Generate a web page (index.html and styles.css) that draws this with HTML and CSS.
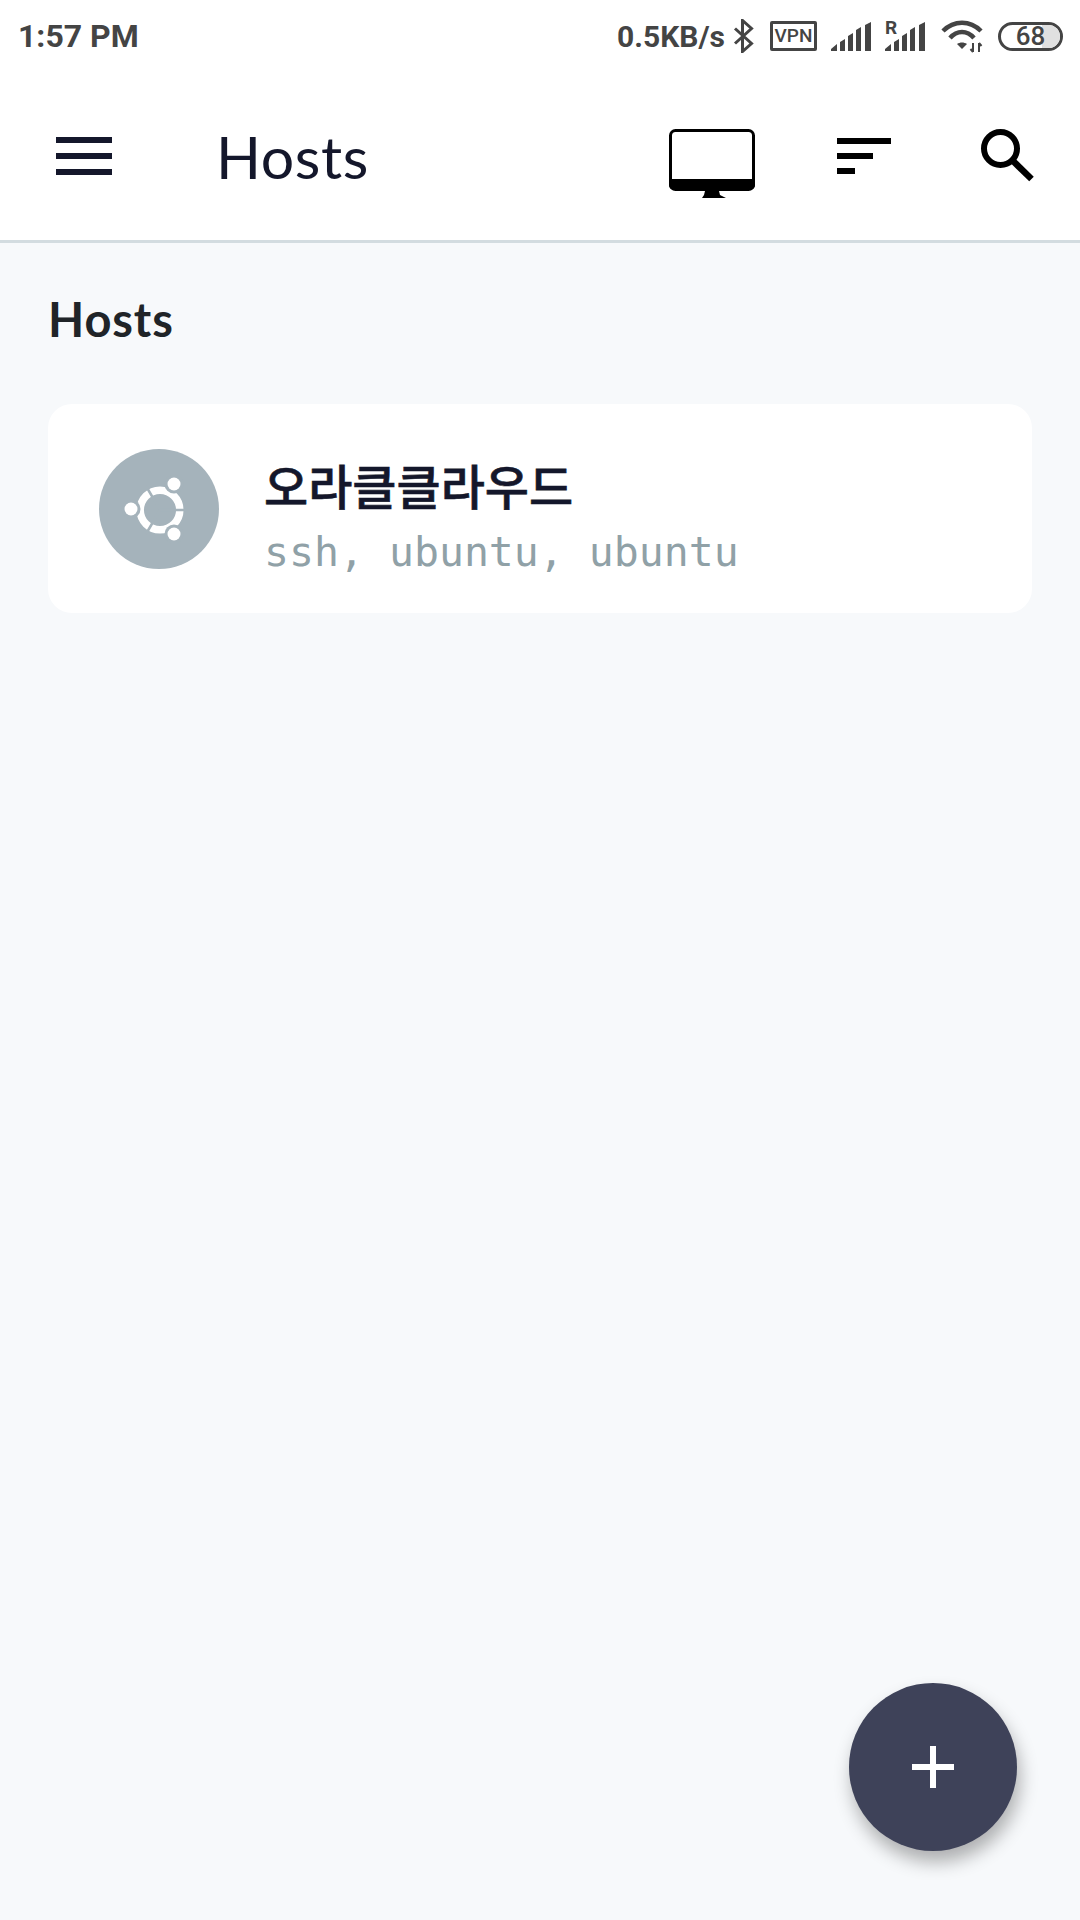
FILE: index.html
```html
<!DOCTYPE html>
<html lang="en">
<head>
<meta charset="UTF-8">
<meta name="viewport" content="width=device-width, initial-scale=1.0">
<title>Hosts</title>
<link rel="stylesheet" href="styles.css">
</head>
<body>
<div class="page">
    <!-- Status bar -->
    <div class="statusBar">
        <span class="clock">1:57 PM</span>
        <div class="statusIcons">
            <span class="speed">0.5KB/s</span>
            <svg class="btIcon" width="21" height="34" viewBox="0 0 21 34">
                <path d="M2 9.5 L18.5 24.5 L9.5 32.5 V1.5 L18.5 9.5 L2 24.5" fill="none" stroke="#444" stroke-width="3"/>
            </svg>
            <span class="vpnBox">VPN</span>
            <svg class="signalOne" width="40" height="29" viewBox="0 0 40 29">
                <path d="M0 29 V27 L6 22 V29 Z M9 29 V20 L14 17 V29 Z M17 29 V14 L22 11 V29 Z M25 29 V8 L30 5 V29 Z M34 29 V3 L40 0 V29 Z" fill="#444"/>
            </svg>
            <div class="roamSignal">
                <span class="roamText">R</span>
                <svg width="40" height="29" viewBox="0 0 40 29">
                    <path d="M0 29 V27 L6 22 V29 Z M9 29 V20 L14 17 V29 Z M17 29 V14 L22 11 V29 Z M25 29 V8 L30 5 V29 Z M34 29 V3 L40 0 V29 Z" fill="#444"/>
                </svg>
            </div>
            <svg class="wifiIcon" width="44" height="34" viewBox="0 0 44 34">
                <path d="M2 12 C13 1 29 1 40 12" fill="none" stroke="#444" stroke-width="4.5"/>
                <path d="M9 19 C16 11 26 11 33 19" fill="none" stroke="#444" stroke-width="4.5"/>
                <path d="M16 25 C19 23 23 23 26 25 L21 30 Z" fill="#444"/>
                <path d="M32 24 V33 M32 33 L29.5 30 M38 33 V24 M38 24 L40.5 27" fill="none" stroke="#444" stroke-width="2"/>
            </svg>
            <div class="battery">
                <span class="batteryFill"></span>
                <span class="batteryText">68</span>
            </div>
        </div>
    </div>

    <!-- App bar -->
    <div class="appBar">
        <div class="menuIcon">
            <span></span>
            <span></span>
            <span></span>
        </div>
        <h1 class="appTitle">Hosts</h1>
        <svg class="monitorIcon" width="86" height="69" viewBox="0 0 86 69">
            <rect x="1.5" y="1.5" width="83" height="59" rx="5" fill="#fff" stroke="#000" stroke-width="3"/>
            <path d="M0 50 H86 V56 a5 5 0 0 1 -5 5 H5 a5 5 0 0 1 -5 -5 Z" fill="#000"/>
            <path d="M36 62 H50 L51 66 L57 69 H33 L35 66 Z" fill="#000"/>
        </svg>
        <div class="sortIcon">
            <span class="sortLong"></span>
            <span class="sortMid"></span>
            <span class="sortShort"></span>
        </div>
        <svg class="searchIcon" width="54" height="54" viewBox="0 0 54 54">
            <circle cx="19.5" cy="19.5" r="16.5" fill="none" stroke="#000" stroke-width="6"/>
            <path d="M31 31 L50.5 50" fill="none" stroke="#000" stroke-width="6.5"/>
        </svg>
    </div>

    <!-- Host list -->
    <div class="content">
        <h2 class="sectionTitle">Hosts</h2>
        <div class="hostCard">
            <div class="hostAvatar">
                <svg width="120" height="120" viewBox="0 0 120 120">
                    <circle cx="61" cy="61" r="19.8" fill="none" stroke="#fff" stroke-width="7.5"/>
                    <path d="M61 61 H88 M61 61 L47 85 M61 61 L47 37" stroke="#a5b3bb" stroke-width="2.5"/>
                    <circle cx="32" cy="60" r="9.5" fill="#a5b3bb"/>
                    <circle cx="75" cy="35" r="9.5" fill="#a5b3bb"/>
                    <circle cx="75" cy="85" r="9.5" fill="#a5b3bb"/>
                    <circle cx="32" cy="60" r="6.5" fill="#fff"/>
                    <circle cx="75" cy="35" r="6.5" fill="#fff"/>
                    <circle cx="75" cy="85" r="6.5" fill="#fff"/>
                </svg>
            </div>
            <div class="hostInfo">
                <div class="hostName">오라클클라우드</div>
                <div class="hostMeta">ssh, ubuntu, ubuntu</div>
            </div>
        </div>
    </div>

    <button class="addButton" type="button">
        <svg width="42" height="42" viewBox="0 0 42 42">
            <path d="M21 0 V42 M0 21 H42" stroke="#fff" stroke-width="6"/>
        </svg>
    </button>
</div>
</body>
</html>
```

FILE: styles.css
```css
/* Page */
body {
    margin: 0;
    background-color: #f7f9fb;
    font-family: "Lato", "Noto Sans CJK KR", sans-serif;
}

.page {
    position: relative;
    width: 1080px;
    height: 1920px;
    overflow: hidden;
    display: flex;
    flex-direction: column;
}

/* Status bar */
.statusBar {
    height: 72px;
    padding: 0 17px 0 18px;
    display: flex;
    align-items: center;
    justify-content: space-between;
    background-color: #fff;
    color: #444;
    font-family: "Roboto", sans-serif;
    font-weight: 700;
}

.clock {
    font-size: 32px;
}

.statusIcons {
    display: flex;
    align-items: center;
}

.speed {
    font-size: 30px;
    margin-right: 8px;
}

.btIcon {
    margin-right: 16px;
}

.vpnBox {
    box-sizing: border-box;
    width: 47px;
    height: 30px;
    margin-right: 14px;
    border: 3px solid #444;
    border-radius: 2px;
    font-size: 19px;
    font-weight: 500;
    line-height: 24px;
    text-align: center;
}

.signalOne {
    margin-right: 14px;
}

.roamSignal {
    position: relative;
    display: flex;
    margin-right: 16px;
}

.roamText {
    position: absolute;
    left: 0;
    top: -5px;
    font-size: 19px;
    line-height: 22px;
}

.wifiIcon {
    margin-right: 13px;
}

.battery {
    position: relative;
    box-sizing: border-box;
    width: 65px;
    height: 29px;
    border: 3px solid #444;
    border-radius: 15px;
    display: flex;
    align-items: center;
    justify-content: center;
    font-size: 26px;
    font-weight: 500;
}

.batteryFill {
    position: absolute;
    top: 0;
    right: 0;
    bottom: 0;
    width: 30%;
    border-radius: 0 12px 12px 0;
    background-color: #e0e0e0;
}

.batteryText {
    position: relative;
    line-height: 23px;
}

/* App bar */
.appBar {
    box-sizing: border-box;
    height: 171px;
    padding: 0 45px 0 56px;
    display: flex;
    align-items: center;
    background-color: #fff;
    border-bottom: 3px solid #d3dce0;
}

.menuIcon {
    width: 56px;
    display: flex;
    flex-direction: column;
    gap: 10px;
    margin-right: 104px;
}

.menuIcon span {
    height: 6px;
    background-color: #14172b;
}

.appTitle {
    flex: 1;
    margin: 0;
    color: #14172b;
    font-size: 59px;
    font-weight: 400;
    letter-spacing: 0.6px;
}

.monitorIcon {
    margin-top: 14px;
    margin-right: 82px;
}

.sortIcon {
    display: flex;
    flex-direction: column;
    gap: 9px;
    width: 54px;
    margin-right: 90px;
}

.sortIcon span {
    height: 6px;
    background-color: #000;
}

.sortLong {
    width: 54px;
}

.sortMid {
    width: 36px;
}

.sortShort {
    width: 18px;
}

/* Host list */
.content {
    padding: 0 48px;
}

.sectionTitle {
    margin: 44px 0 0 0;
    color: #202428;
    font-size: 47px;
    font-weight: 700;
    line-height: 64px;
    letter-spacing: 0.9px;
}

.hostCard {
    box-sizing: border-box;
    height: 209px;
    margin-top: 53px;
    padding: 0 51px;
    display: flex;
    align-items: center;
    gap: 45px;
    background-color: #fff;
    border-radius: 24px;
}

.hostAvatar {
    width: 120px;
    height: 120px;
    border-radius: 50%;
    background-color: #a5b3bb;
}

.hostInfo {
    padding-top: 19px;
}

.hostName {
    color: #14172b;
    font-family: "Noto Sans CJK KR", sans-serif;
    font-size: 48px;
    font-weight: 500;
    line-height: 58px;
    -webkit-text-stroke: 0.6px #14172b;
}

.hostMeta {
    margin-top: 9px;
    color: #90a1a7;
    font-family: "DejaVu Sans Mono", monospace;
    font-size: 41.5px;
    line-height: 60px;
}

/* Add button */
.addButton {
    position: absolute;
    left: 849px;
    top: 1683px;
    width: 168px;
    height: 168px;
    padding: 0;
    border: none;
    border-radius: 50%;
    display: flex;
    align-items: center;
    justify-content: center;
    background-color: #3e4259;
    box-shadow: 3px 11px 18px rgba(0, 0, 0, 0.3);
}
```
